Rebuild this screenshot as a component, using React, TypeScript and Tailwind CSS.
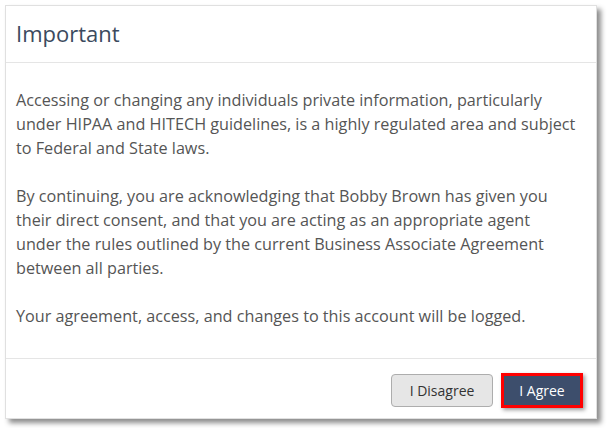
import React from 'react';

const font = { fontFamily: '"Open Sans", "Noto Sans", Arial, sans-serif' };

export default function App() {
  return (
    <div className="w-[607px] h-[428px] bg-white pt-[5px] pl-[5px]" style={font}>
      <div className="w-[592px] h-[414px] bg-white border border-[#e0e0e0] shadow-[4px_4px_5px_rgba(0,0,0,0.45)] flex flex-col">
        {/* Header */}
        <div className="h-[57px] border-b border-[#e5e5e5] flex items-center px-[10px]">
          <h1 className="text-[22px] text-[#3b4a5e] leading-none pb-[2px]">Important</h1>
        </div>

        {/* Body */}
        <div className="flex-1 px-[10px] pt-[25px] text-[16.2px] leading-[24px] text-[#555555] whitespace-nowrap">
          <p>
            Accessing or changing any individuals private information, particularly
            <br />
            under HIPAA and HITECH guidelines, is a highly regulated area and subject
            <br />
            to Federal and State laws.
          </p>
          <p className="mt-[24px]">
            By continuing, you are acknowledging that Bobby Brown has given you
            <br />
            their direct consent, and that you are acting as an appropriate agent
            <br />
            under the rules outlined by the current Business Associate Agreement
            <br />
            between all parties.
          </p>
          <p className="mt-[24px]">
            Your agreement, access, and changes to this account will be logged.
          </p>
        </div>

        {/* Footer */}
        <div className="h-[60px] border-t border-[#e5e5e5] flex items-start justify-end gap-[8px] pt-[15px] pr-[13px]">
          <button className="w-[102px] h-[33px] rounded-[4px] border border-[#adadad] bg-[#e6e6e6] text-[14px] text-[#333333]">
            I Disagree
          </button>
          <button className="-mt-[1px] w-[82px] h-[35px] border-[3px] border-[#ff0000] bg-[#3d4e6c] text-[14px] text-white shadow-[2px_2px_4px_rgba(0,0,0,0.4)]">
            I Agree
          </button>
        </div>
      </div>
    </div>
  );
}
